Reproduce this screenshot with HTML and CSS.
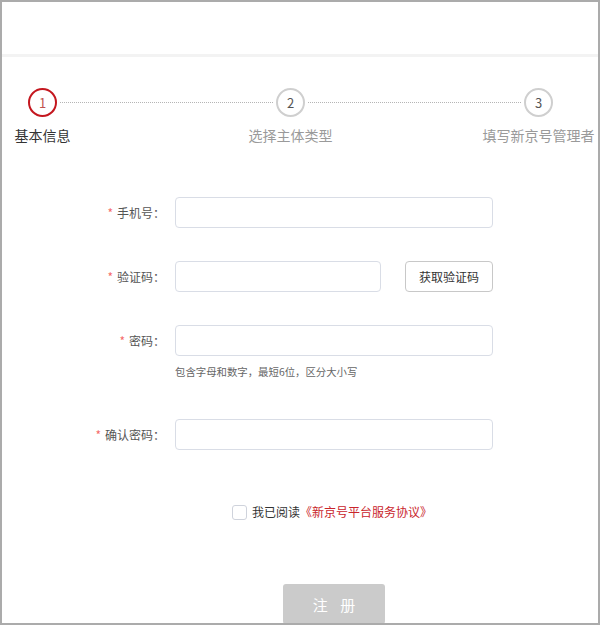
FILE: index.html
```html
<!DOCTYPE html>
<html lang="zh-CN">
<head>
<meta charset="utf-8">
<title>注册</title>
<link rel="stylesheet" href="styles.css">
</head>
<body>
<div class="frame">
  <div class="header"></div>
  <div class="steps">
    <div class="step active">
      <div class="circle">1</div>
      <div class="step-label">基本信息</div>
    </div>
    <div class="line"></div>
    <div class="step">
      <div class="circle">2</div>
      <div class="step-label">选择主体类型</div>
    </div>
    <div class="line"></div>
    <div class="step">
      <div class="circle">3</div>
      <div class="step-label">填写新京号管理者</div>
    </div>
  </div>

  <form class="form">
    <div class="row">
      <label class="label"><span class="req">*</span>手机号：</label>
      <input class="input" type="text">
    </div>
    <div class="row">
      <label class="label"><span class="req">*</span>验证码：</label>
      <div class="code-wrap">
        <input class="input code" type="text">
        <button type="button" class="code-btn">获取验证码</button>
      </div>
    </div>
    <div class="row">
      <label class="label"><span class="req">*</span>密码：</label>
      <input class="input" type="password">
    </div>
    <div class="row hint-row">
      <span></span>
      <div class="hint">包含字母和数字，最短6位，区分大小写</div>
    </div>
    <div class="row last">
      <label class="label"><span class="req">*</span>确认密码：</label>
      <input class="input" type="password">
    </div>
    <div class="agree">
      <span class="checkbox"></span>
      <span class="agree-text">我已阅读</span><a class="agree-link">《新京号平台服务协议》</a>
    </div>
    <div class="submit-wrap">
      <button type="button" class="submit">注 册</button>
    </div>
  </form>
</div>
</body>
</html>
```

FILE: styles.css
```css
* { box-sizing: border-box; }
html, body { margin: 0; padding: 0; background: #fff; }
body {
  font-family: "Noto Sans CJK SC", "Noto Sans", sans-serif;
  color: #333;
}
.frame {
  width: 600px;
  height: 625px;
  border: 2px solid #ababab;
  overflow: hidden;
  background: #fff;
}
.header {
  height: 55px;
  border-bottom: 3px solid #f3f3f3;
}
.steps {
  display: flex;
  align-items: flex-start;
  padding: 31px 45px 0 26px;
}
.step {
  width: 29px;
  display: flex;
  flex-direction: column;
  align-items: center;
  flex: none;
}
.circle {
  width: 29px;
  height: 29px;
  border-radius: 50%;
  border: 2px solid #cfcfcf;
  color: #555;
  font-size: 13px;
  line-height: 25px;
  text-align: center;
}
.step.active .circle {
  border-color: #c4171f;
  color: #c0504d;
}
.step-label {
  margin-top: 9px;
  font-size: 14px;
  line-height: 18px;
  white-space: nowrap;
  color: #9a9a9a;
}
.step.active .step-label { color: #333; }
.line {
  flex: 1;
  margin: 14px 3px 0;
  border-top: 1px dotted #b5b5b5;
}
.form {
  margin: 53px 0 0;
}
.row {
  display: grid;
  grid-template-columns: 163px 318px;
  column-gap: 10px;
  align-items: center;
  margin-bottom: 33px;
}
.row.hint-row { margin-top: -24px; margin-bottom: 40px; }
.row.last { margin-bottom: 54px; }
.label {
  text-align: right;
  font-size: 12px;
  color: #555;
  white-space: nowrap;
}
.req {
  color: #f56c6c;
  margin-right: 4px;
}
.input {
  display: block;
  width: 318px;
  height: 31px;
  border: 1px solid #d9dde6;
  border-radius: 4px;
  background: #fff;
  padding: 0 8px;
  font: inherit;
  outline: none;
}
.code-wrap {
  display: flex;
  justify-content: space-between;
  align-items: center;
}
.input.code { width: 206px; }
.code-btn {
  width: 88px;
  height: 31px;
  border: 1px solid #c8c8c8;
  border-radius: 4px;
  background: #fff;
  font-family: inherit;
  font-size: 12px;
  color: #333;
  padding: 0;
}
.hint {
  font-size: 10.4px;
  line-height: 14px;
  color: #666;
}
.agree {
  display: flex;
  align-items: center;
  height: 16px;
  padding-left: 230px;
  font-size: 12px;
  line-height: 16px;
}
.checkbox {
  width: 15px;
  height: 15px;
  border: 1px solid #cfd3dc;
  border-radius: 3px;
  margin-right: 5px;
  background: #fff;
}
.agree-text { color: #333; }
.agree-link { color: #c9252c; }
.submit-wrap {
  margin-top: 64px;
  padding-left: 281px;
}
.submit {
  width: 102px;
  height: 40px;
  border: none;
  border-radius: 3px;
  background: #cbcbcb;
  color: #fff;
  font-family: inherit;
  font-size: 15px;
  word-spacing: 9px;
  padding: 0;
}
```
